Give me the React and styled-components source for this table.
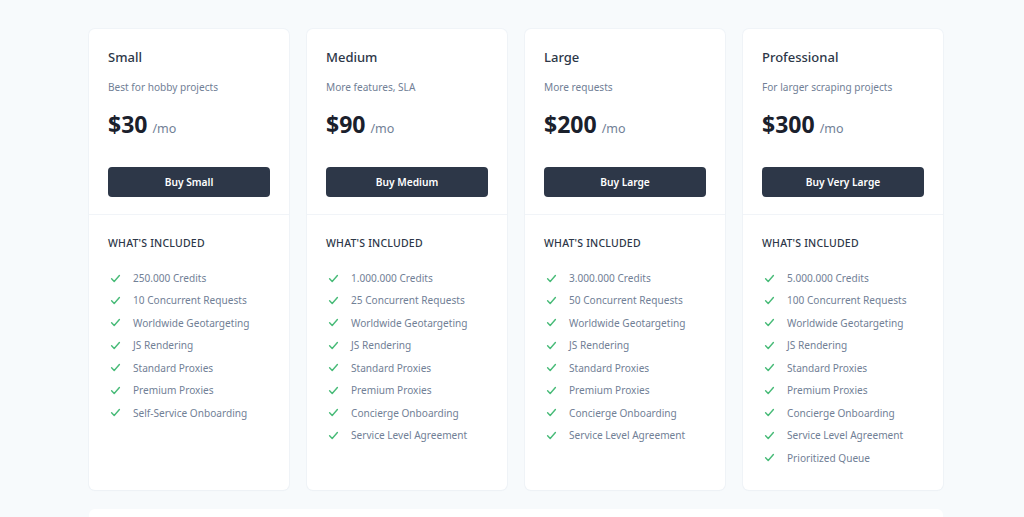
import React from "react";
import styled, { createGlobalStyle } from "styled-components";

const Global = createGlobalStyle`
  html, body { margin: 0; padding: 0; background: #f7fafc; }
  body { font-family: "Noto Sans", "Open Sans", sans-serif; -webkit-font-smoothing: antialiased; }
  * { box-sizing: border-box; }
`;

const Page = styled.div`
  padding: 29px 0 0 89px;
  width: 1024px;
  height: 517px;
  overflow: hidden;
`;

const Grid = styled.div`
  display: grid;
  grid-template-columns: repeat(4, 200px);
  column-gap: 18px;
  align-items: stretch;
`;

const Card = styled.div`
  background: #ffffff;
  border-radius: 6px;
  box-shadow: 0 0 0 1px rgba(226, 232, 240, 0.35), 0 1px 2px rgba(0, 0, 0, 0.02);
  display: flex;
  flex-direction: column;
`;

const Top = styled.div`
  padding: 18px 19px 17px 19px;
  border-bottom: 1px solid #f1f4f8;
`;

const Title = styled.h2`
  margin: 0;
  font-size: 13px;
  line-height: 20px;
  font-weight: 500;
  color: #2d3748;
`;

const Subtitle = styled.p`
  margin: 12px 0 0;
  font-size: 10.1px;
  line-height: 16px;
  color: #718096;
`;

const PriceRow = styled.p`
  margin: 14px 0 0;
  line-height: 30px;
  display: flex;
  align-items: baseline;
  gap: 5px;
`;

const Amount = styled.span`
  font-size: 23px;
  font-weight: 700;
  color: #1a202c;
`;

const Per = styled.span`
  font-size: 12.5px;
  color: #718096;
`;

const BuyButton = styled.button`
  margin-top: 23px;
  width: 162px;
  height: 30px;
  border: none;
  border-radius: 4px;
  background: #2d3748;
  color: #ffffff;
  font-family: inherit;
  font-size: 10.2px;
  font-weight: 600;
  cursor: pointer;
  display: block;
`;

const Bottom = styled.div`
  padding: 20px 19px 24px 19px;
  flex: 1;
`;

const Heading = styled.h3`
  margin: 0;
  font-size: 10.5px;
  line-height: 16px;
  font-weight: 500;
  letter-spacing: 0.2px;
  color: #2d3748;
  text-transform: uppercase;
`;

const List = styled.ul`
  list-style: none;
  margin: 19px 0 0;
  padding: 0;
  display: flex;
  flex-direction: column;
  gap: 6.45px;
`;

const Item = styled.li`
  display: flex;
  align-items: center;
  gap: 11px;
  font-size: 10.1px;
  line-height: 16px;
  color: #718096;
`;

const CheckSvg = styled.svg`
  width: 13px;
  height: 13px;
  flex-shrink: 0;
  margin-left: 1px;
  color: #48bb78;
`;

const Check = () => (
  <CheckSvg viewBox="0 0 20 20" fill="none" stroke="currentColor" strokeWidth="2.2" strokeLinecap="round" strokeLinejoin="round">
    <path d="M4 10.5l4 4 8-9" />
  </CheckSvg>
);

const Lower = styled.div`
  margin-top: 19px;
  width: 854px;
  height: 40px;
  background: #ffffff;
  border-radius: 6px;
`;

const base = ["Worldwide Geotargeting", "JS Rendering", "Standard Proxies", "Premium Proxies"];

const plans = [
  {
    name: "Small",
    desc: "Best for hobby projects",
    price: "$30",
    button: "Buy Small",
    items: ["250.000 Credits", "10 Concurrent Requests", ...base, "Self-Service Onboarding"],
  },
  {
    name: "Medium",
    desc: "More features, SLA",
    price: "$90",
    button: "Buy Medium",
    items: ["1.000.000 Credits", "25 Concurrent Requests", ...base, "Concierge Onboarding", "Service Level Agreement"],
  },
  {
    name: "Large",
    desc: "More requests",
    price: "$200",
    button: "Buy Large",
    items: ["3.000.000 Credits", "50 Concurrent Requests", ...base, "Concierge Onboarding", "Service Level Agreement"],
  },
  {
    name: "Professional",
    desc: "For larger scraping projects",
    price: "$300",
    button: "Buy Very Large",
    items: [
      "5.000.000 Credits",
      "100 Concurrent Requests",
      ...base,
      "Concierge Onboarding",
      "Service Level Agreement",
      "Prioritized Queue",
    ],
  },
];

export default function App() {
  return (
    <>
      <Global />
      <Page>
        <Grid>
          {plans.map((p) => (
            <Card key={p.name}>
              <Top>
                <Title>{p.name}</Title>
                <Subtitle>{p.desc}</Subtitle>
                <PriceRow>
                  <Amount>{p.price}</Amount>
                  <Per>/mo</Per>
                </PriceRow>
                <BuyButton>{p.button}</BuyButton>
              </Top>
              <Bottom>
                <Heading>What's included</Heading>
                <List>
                  {p.items.map((it) => (
                    <Item key={it}>
                      <Check />
                      <span>{it}</span>
                    </Item>
                  ))}
                </List>
              </Bottom>
            </Card>
          ))}
        </Grid>
        <Lower />
      </Page>
    </>
  );
}
